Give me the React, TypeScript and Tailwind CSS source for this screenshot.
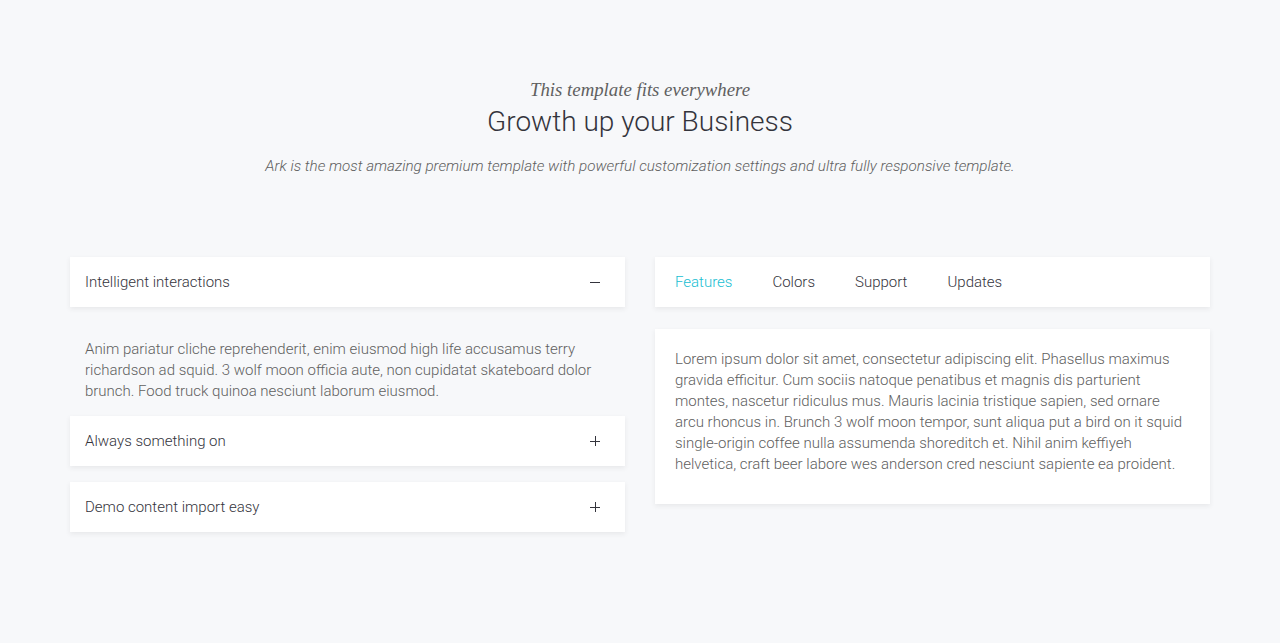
import React from 'react';

const roboto = { fontFamily: 'Roboto, "Liberation Sans", sans-serif' };

function AccordionItem({ title, open, children }: { title: string; open?: boolean; children?: React.ReactNode }) {
  return (
    <div className="mb-[16px]">
      <div className="flex h-[50px] items-center justify-between bg-white px-[15px] shadow-[0_2px_5px_0_rgba(50,50,50,0.08)]">
        <span className="text-[15px] font-light text-[#34343c]">{title}</span>
        <span className="mr-[10px] flex w-[10px] justify-center text-[#34343c]">
          {open ? (
            <svg width="10" height="10" viewBox="0 0 10 10"><path d="M0 5.5h10" stroke="#34343c" strokeWidth="1" /></svg>
          ) : (
            <svg width="10" height="10" viewBox="0 0 10 10"><path d="M0 5.5h10M5.5 0v10" stroke="#34343c" strokeWidth="1" /></svg>
          )}
        </span>
      </div>
      {open && (
        <div className="mb-[-2px] px-[15px] pt-[32px] text-[15px] font-light leading-[21px] text-[#606060]">{children}</div>
      )}
    </div>
  );
}

export default function App() {
  const tabs = ["Features", "Colors", "Support", "Updates"];

  return (
    <div className="min-h-[643px] bg-[#f7f8fa]" style={roboto}>
      <div className="mx-auto w-[1140px] pt-[78px]">
        <div className="text-center">
          <p className="text-[18.8px] italic leading-6 text-[#606060]" style={{ fontFamily: '"Liberation Serif", serif' }}>
            This template fits everywhere
          </p>
          <h2 className="mt-[4px] text-[28px] font-light leading-8 text-[#34343c]">Growth up your Business</h2>
          <p className="mt-[16px] text-[15.2px] font-light italic leading-6 text-[#606060]">
            Ark is the most amazing premium template with powerful customization settings and ultra fully responsive template.
          </p>
        </div>

        <div className="mt-[79px] grid grid-cols-2 gap-[30px]">
          <div>
            <AccordionItem title="Intelligent interactions" open>
              Anim pariatur cliche reprehenderit, enim eiusmod high life accusamus terry richardson ad squid. 3 wolf moon officia aute, non cupidatat skateboard dolor brunch. Food truck quinoa nesciunt laborum eiusmod.
            </AccordionItem>
            <AccordionItem title="Always something on" />
            <AccordionItem title="Demo content import easy" />
          </div>

          <div>
            <div className="flex h-[50px] items-center gap-[40px] bg-white px-[20px] shadow-[0_2px_5px_0_rgba(50,50,50,0.08)]">
              {tabs.map((tab, i) => (
                <span key={tab} className={"text-[15px] font-light " + (i === 0 ? "text-[#17bed2]" : "text-[#34343c]")}>
                  {tab}
                </span>
              ))}
            </div>
            <div className="mt-[22px] bg-white px-[20px] pb-[29px] pt-[20px] text-[15px] font-light leading-[21px] text-[#606060] shadow-[0_2px_5px_0_rgba(50,50,50,0.08)]">
              Lorem ipsum dolor sit amet, consectetur adipiscing elit. Phasellus maximus gravida efficitur. Cum sociis natoque penatibus et magnis dis parturient montes, nascetur ridiculus mus. Mauris lacinia tristique sapien, sed ornare arcu rhoncus in. Brunch 3 wolf moon tempor, sunt aliqua put a bird on it squid single-origin coffee nulla assumenda shoreditch et. Nihil anim keffiyeh helvetica, craft beer labore wes anderson cred nesciunt sapiente ea proident.
            </div>
          </div>
        </div>
      </div>
    </div>
  );
}
